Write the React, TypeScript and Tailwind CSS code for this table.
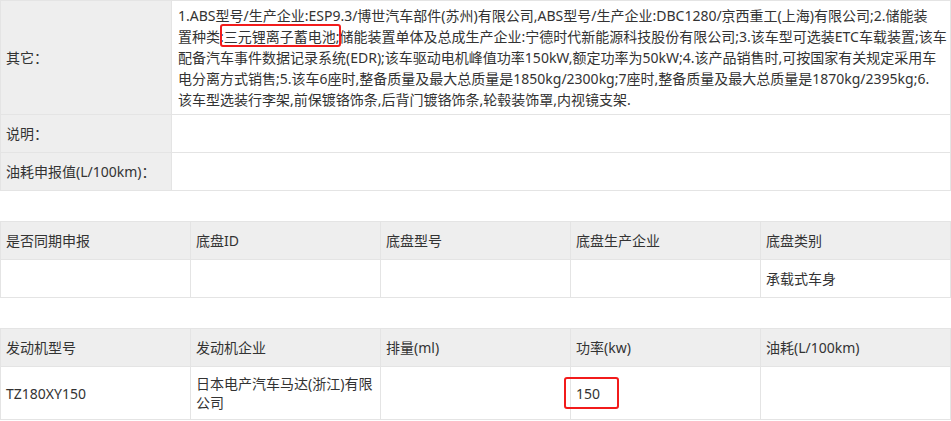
const otherLines = [
  <>1.ABS型号/生产企业:ESP9.3/博世汽车部件(苏州)有限公司,ABS型号/生产企业:DBC1280/京西重工(上海)有限公司;2.储能装</>,
  <>
    置种类:
    <span className="relative">
      三元锂离子蓄电池
      <span className="absolute -left-[4px] -right-[5px] -top-[3px] -bottom-[1px] rounded-[3px] border-2 border-[#f21b1b]"></span>
    </span>
    ;储能装置单体及总成生产企业:宁德时代新能源科技股份有限公司;3.该车型可选装ETC车载装置;该车
  </>,
  <>配备汽车事件数据记录系统(EDR);该车驱动电机峰值功率150kW,额定功率为50kW;4.该产品销售时,可按国家有关规定采用车</>,
  <>电分离方式销售;5.该车6座时,整备质量及最大总质量是1850kg/2300kg;7座时,整备质量及最大总质量是1870kg/2395kg;6.</>,
  <>该车型选装行李架,前保镀铬饰条,后背门镀铬饰条,轮毂装饰罩,内视镜支架.</>,
];

const chassisHead = ["是否同期申报", "底盘ID", "底盘型号", "底盘生产企业", "底盘类别"];
const chassisRow = ["", "", "", "", "承载式车身"];

const engineHead = ["发动机型号", "发动机企业", "排量(ml)", "功率(kw)", "油耗(L/100km)"];

function InfoRow({ label, children, h }: { label: string; children?: React.ReactNode; h: string }) {
  return (
    <tr className={h}>
      <td className="w-[171px] border border-[#e4e4e4] bg-[#eeeeee] px-[5px] align-middle">{label}</td>
      <td className="border border-[#e4e4e4] bg-white px-[6px] py-[4px] align-top leading-[21px]">{children}</td>
    </tr>
  );
}

export default function App() {
  return (
    <div
      className="w-[951px] bg-white text-[14px] text-[#333333]"
      style={{ fontFamily: '"Noto Sans", "Noto Sans CJK SC", sans-serif' }}
    >
      <table className="w-full table-fixed border-collapse">
        <tbody>
          <InfoRow label="其它：" h="h-[114px]">
            {otherLines.map((line, i) => (
              <div key={i} className="whitespace-nowrap">{line}</div>
            ))}
          </InfoRow>
          <InfoRow label="说明：" h="h-[38px]" />
          <InfoRow label="油耗申报值(L/100km)：" h="h-[38px]" />
        </tbody>
      </table>

      <table className="mt-[30px] w-full table-fixed border-collapse">
        <tbody>
          <tr className="h-[38px] bg-[#eeeeee]">
            {chassisHead.map((t) => (
              <td key={t} className="border border-[#e4e4e4] px-[5px]">{t}</td>
            ))}
          </tr>
          <tr className="h-[38px] bg-white">
            {chassisRow.map((t, i) => (
              <td key={i} className="border border-[#e4e4e4] px-[5px]">{t}</td>
            ))}
          </tr>
        </tbody>
      </table>

      <table className="mt-[30px] w-full table-fixed border-collapse">
        <tbody>
          <tr className="h-[38px] bg-[#eeeeee]">
            {engineHead.map((t) => (
              <td key={t} className="border border-[#e4e4e4] px-[5px]">{t}</td>
            ))}
          </tr>
          <tr className="h-[53px] bg-white leading-[19px]">
            <td className="border border-[#e4e4e4] px-[5px]">TZ180XY150</td>
            <td className="border border-[#e4e4e4] px-[5px] py-[7px]">日本电产汽车马达(浙江)有限公司</td>
            <td className="border border-[#e4e4e4] px-[5px]"></td>
            <td className="border border-[#e4e4e4] px-[5px]">
              <span className="relative">
                150
                <span className="absolute -left-[12px] -right-[19px] -top-[7px] -bottom-[6px] rounded-[3px] border-2 border-[#f21b1b]"></span>
              </span>
            </td>
            <td className="border border-[#e4e4e4] px-[5px]"></td>
          </tr>
        </tbody>
      </table>
    </div>
  );
}
